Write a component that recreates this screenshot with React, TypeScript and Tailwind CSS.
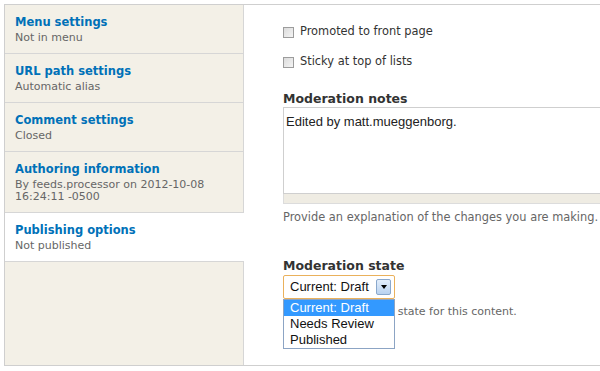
type Tab = { title: string; summary: string[]; active?: boolean };

const tabs: Tab[] = [
    { title: 'Menu settings', summary: ['Not in menu'] },
    { title: 'URL path settings', summary: ['Automatic alias'] },
    { title: 'Comment settings', summary: ['Closed'] },
    { title: 'Authoring information', summary: ['By feeds.processor on 2012-10-08', '16:24:11 -0500'] },
    { title: 'Publishing options', summary: ['Not published'], active: true },
];

const options = ['Current: Draft', 'Needs Review', 'Published'];

export default function App() {
    return (
        <div className="h-[371px] w-[600px] overflow-hidden bg-white pl-[4px] pt-[4px] font-['DejaVu_Sans',Verdana,sans-serif]">
            <div className="flex h-[362px] w-[700px] border-y border-l border-[#cfcfcf]">
                <aside className="flex w-[239px] shrink-0 flex-col">
                    {tabs.map((t) => (
                        <VerticalTab key={t.title} {...t} />
                    ))}
                    <div className="flex-1 border-r border-[#d6d6d6] bg-[#f3f0e7]" />
                </aside>

                <main className="flex-1 pl-[39px] pt-[19px]">
                    <Checkbox label="Promoted to front page" />
                    <div className="mt-[14px]">
                        <Checkbox label="Sticky at top of lists" />
                    </div>

                    <label className="mt-[21px] block text-[12.5px] leading-[16px] font-bold text-[#333]">Moderation notes</label>
                    <div className="w-[340px]">
                        <div className="h-[87px] border border-[#cfcfcf] bg-white px-[2px] pt-[6px] font-['Liberation_Sans',Arial,sans-serif] text-[13px] leading-[16px] text-[#222]">
                            Edited by matt.mueggenborg.
                        </div>
                        <div className="h-[10px] border-x border-b border-[#dcdcdc] bg-[#efece3]" />
                    </div>
                    <p className="mt-[6px] text-[11.4px] leading-[14px] text-[#666]">Provide an explanation of the changes you are making.</p>

                    <label className="mt-[34px] block text-[12.5px] leading-[16px] font-bold text-[#333]">Moderation state</label>
                    <div className="relative mt-[1px]">
                        <div className="flex h-[24px] w-[112px] items-center justify-between rounded-[2px] border border-[#eab15c] bg-white pl-[6px] pr-[3px] font-['Liberation_Sans',Arial,sans-serif] text-[13px] text-[#111]">
                            <span>Current: Draft</span>
                            <span className="flex h-[16px] w-[15px] items-center justify-center rounded-[2px] border border-[#8aa8cc] bg-gradient-to-b from-[#e3eefb] to-[#b9d2ef]">
                                <span className="h-0 w-0 border-x-[3.5px] border-t-[4px] border-x-transparent border-t-black" />
                            </span>
                        </div>
                        <p className="mt-[6px] text-[11px] leading-[14px] text-[#666]">Select a moderation state for this content.</p>

                        {/* open dropdown list lies over the help text */}
                        <ul className="absolute left-0 top-[24px] w-[112px] border border-[#8ca4c4] bg-white font-['Liberation_Sans',Arial,sans-serif] text-[13px] leading-[16px] text-[#111]">
                            {options.map((o, i) => (
                                <li key={o} className={i === 0 ? 'bg-[#3399ff] pl-[6px] text-white' : 'pl-[6px]'}>
                                    {o}
                                </li>
                            ))}
                        </ul>
                    </div>
                </main>
            </div>
        </div>
    );
}

function VerticalTab({ title, summary, active }: Tab) {
    const bg = active ? 'bg-white' : 'border-r bg-[#f3f0e7]';
    return (
        <div className={`border-b border-[#d6d6d6] pb-[9px] pl-[10px] pt-[10px] ${bg}`}>
            <div className="text-[11.5px] leading-[15px] font-bold text-[#0071b8]">{title}</div>
            <div className="mt-[2px]">
                {summary.map((s) => (
                    <div key={s} className="text-[11px] leading-[12px] text-[#666]">
                        {s}
                    </div>
                ))}
            </div>
        </div>
    );
}

function Checkbox({ label }: { label: string }) {
    return (
        <div className="flex h-[16px] items-center">
            <span className="h-[11px] w-[11px] border border-[#9c9c9c] bg-gradient-to-br from-[#dcdcdc] to-[#f4f4f4]" />
            <span className="ml-[6px] text-[11.4px] text-[#333]">{label}</span>
        </div>
    );
}
